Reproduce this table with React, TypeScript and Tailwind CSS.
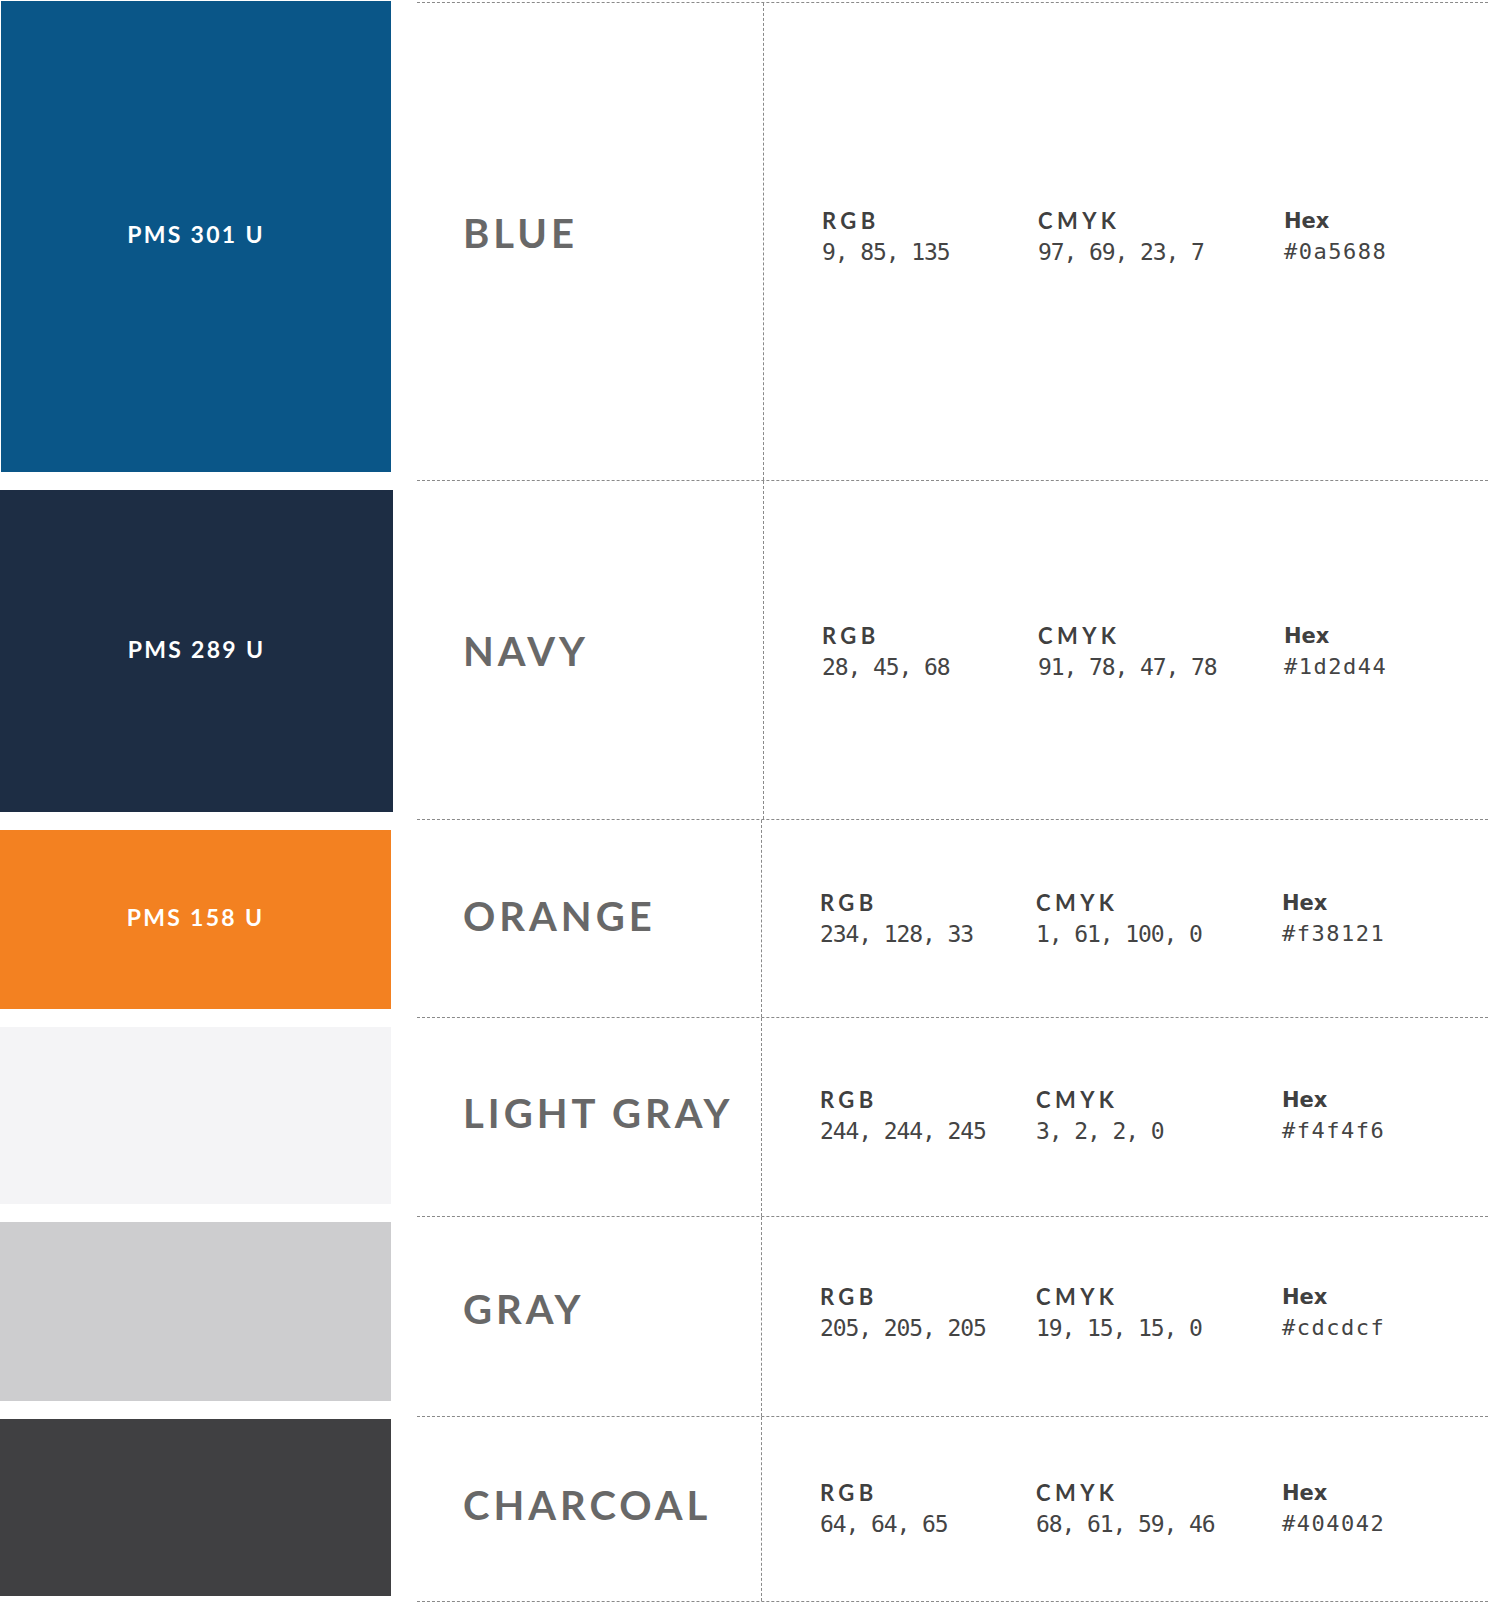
const swatches = [
  { bg: "bg-[#0a5688]", h: "h-[471px]", w: "w-[390px] ml-px", label: "PMS 301 U" },
  { bg: "bg-[#1d2d44]", h: "h-[322px]", w: "w-[393px]", label: "PMS 289 U" },
  { bg: "bg-[#f38121]", h: "h-[179px]", w: "w-[391px]", label: "PMS 158 U" },
  { bg: "bg-[#f4f4f6]", h: "h-[177px]", w: "w-[391px]", label: "" },
  { bg: "bg-[#cdcdcf]", h: "h-[179px]", w: "w-[391px]", label: "" },
  { bg: "bg-[#404042]", h: "h-[177px]", w: "w-[391px]", label: "" },
];

// per-row nudges: the source sheet doesn't centre every row the same way
const colors = [
  { name: "BLUE", h: "h-[479px] border-t", nameCell: "w-[347px] pb-[18px]", vals: "pb-[12px]", rgb: "9, 85, 135", cmyk: "97, 69, 23, 7", hex: "#0a5688" },
  { name: "NAVY", h: "h-[339px]", nameCell: "w-[347px] pt-[2px]", vals: "pt-[2px]", rgb: "28, 45, 68", cmyk: "91, 78, 47, 78", hex: "#1d2d44" },
  { name: "ORANGE", h: "h-[198px]", nameCell: "w-[345px] pb-[6px]", vals: "pb-[2px]", rgb: "234, 128, 33", cmyk: "1, 61, 100, 0", hex: "#f38121" },
  { name: "LIGHT GRAY", h: "h-[199px]", nameCell: "w-[345px] pb-[8px]", vals: "pb-[4px]", rgb: "244, 244, 245", cmyk: "3, 2, 2, 0", hex: "#f4f4f6" },
  { name: "GRAY", h: "h-[200px]", nameCell: "w-[345px] pb-[16px]", vals: "pb-[10px]", rgb: "205, 205, 205", cmyk: "19, 15, 15, 0", hex: "#cdcdcf" },
  { name: "CHARCOAL", h: "h-[185px]", nameCell: "w-[345px] pb-[8px]", vals: "pb-[2px]", rgb: "64, 64, 65", cmyk: "68, 61, 59, 46", hex: "#404042" },
];

function Value({ label, value, hex }: { label: string; value: string; hex?: boolean }) {
  return (
    <div className="flex flex-col">
      {hex ? (
        <span className="font-['DejaVu_Sans',sans-serif] font-bold text-[21px] leading-[32px] text-[#404040]">
          {label}
        </span>
      ) : (
        <span className="font-['Lato',sans-serif] font-bold text-[22px] leading-[32px] tracking-[0.2em] text-[#404040]">
          {label}
        </span>
      )}
      {hex ? (
        <span className="font-['DejaVu_Sans_Mono',monospace] text-[22px] leading-[30px] tracking-[1.5px] text-[#444]">
          {value}
        </span>
      ) : (
        <span className="font-['DejaVu_Sans_Mono',monospace] text-[23px] leading-[30px] tracking-[-1.1px] text-[#444]">
          {value}
        </span>
      )}
    </div>
  );
}

export default function App() {
  return (
    <div className="flex w-[1502px] min-h-[1607px] bg-white">
      <div className="flex flex-col gap-[18px] w-[393px] pt-px">
        {swatches.map((s) => (
          <div key={s.bg} className={`${s.bg} ${s.h} ${s.w} flex items-center justify-center pb-[4px]`}>
            {s.label && (
              <span className="font-['Lato',sans-serif] font-bold text-[23px] tracking-[0.1em] text-white">
                {s.label}
              </span>
            )}
          </div>
        ))}
      </div>

      <div className="ml-[24px] w-[1071px] pt-[2px]">
        {colors.map((c) => (
          <div key={c.name} className={`${c.h} flex border-b border-dashed border-[#8a8a8a]`}>
            <div className={`${c.nameCell} flex items-center pl-[46px] border-r border-dashed border-[#8a8a8a]`}>
              <h2 className="font-['Lato',sans-serif] font-bold text-[40px] tracking-[0.1em] text-[#686868]">
                {c.name}
              </h2>
            </div>
            <div className={`${c.vals} flex flex-1 items-center pl-[58px]`}>
              <div className="w-[216px]">
                <Value label="RGB" value={c.rgb} />
              </div>
              <div className="w-[246px]">
                <Value label="CMYK" value={c.cmyk} />
              </div>
              <Value label="Hex" value={c.hex} hex />
            </div>
          </div>
        ))}
      </div>
    </div>
  );
}
